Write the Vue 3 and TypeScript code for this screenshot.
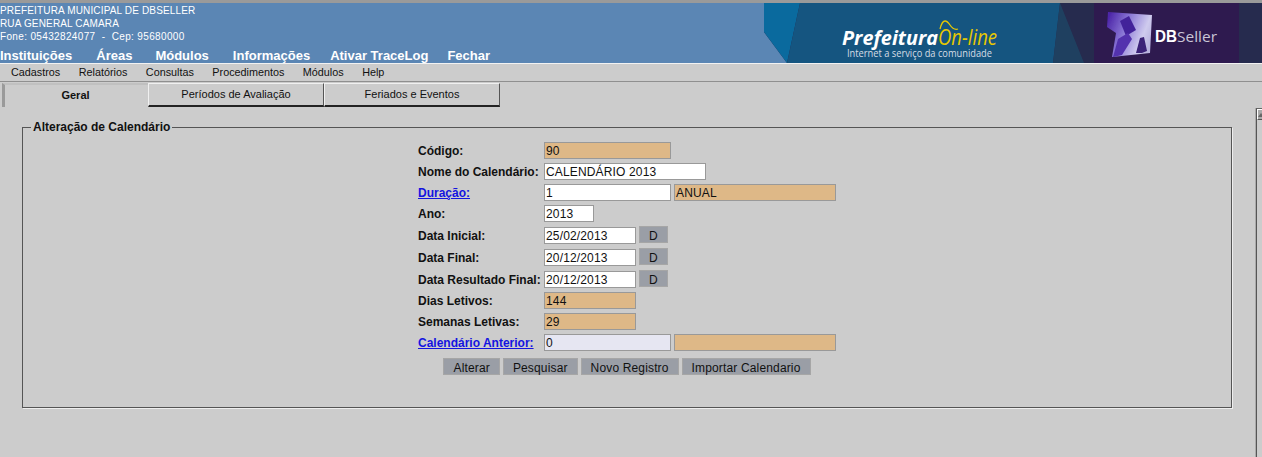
<script setup lang="ts">
interface Field {
  label: string
  link?: boolean
  value: string
  kind: 'ro' | 'edit' | 'lookup'
  width: number
  extra?: string
  date?: boolean
}

const topMenu = [
  { text: 'Instituições', gap: 24 },
  { text: 'Áreas', gap: 23 },
  { text: 'Módulos', gap: 24 },
  { text: 'Informações', gap: 20 },
  { text: 'Ativar TraceLog', gap: 19 },
  { text: 'Fechar', gap: 0 }
]
const subMenu = ['Cadastros', 'Relatórios', 'Consultas', 'Procedimentos', 'Módulos', 'Help']
const tabs = ['Geral', 'Períodos de Avaliação', 'Feriados e Eventos']
const actions = ['Alterar', 'Pesquisar', 'Novo Registro', 'Importar Calendario']

const fields: Field[] = [
  { label: 'Código:', value: '90', kind: 'ro', width: 127 },
  { label: 'Nome do Calendário:', value: 'CALENDÁRIO 2013', kind: 'edit', width: 162 },
  { label: 'Duração:', link: true, value: '1', kind: 'edit', width: 127, extra: 'ANUAL' },
  { label: 'Ano:', value: '2013', kind: 'edit', width: 50 },
  { label: 'Data Inicial:', value: '25/02/2013', kind: 'edit', width: 92, date: true },
  { label: 'Data Final:', value: '20/12/2013', kind: 'edit', width: 92, date: true },
  { label: 'Data Resultado Final:', value: '20/12/2013', kind: 'edit', width: 92, date: true },
  { label: 'Dias Letivos:', value: '144', kind: 'ro', width: 92 },
  { label: 'Semanas Letivas:', value: '29', kind: 'ro', width: 92 },
  { label: 'Calendário Anterior:', link: true, value: '0', kind: 'lookup', width: 127, extra: '' }
]
</script>

<template>
  <div class="page">
    <header class="head">
      <div class="head-left">
        <div class="org">
          <div>PREFEITURA MUNICIPAL DE DBSELLER</div>
          <div>RUA GENERAL CAMARA</div>
          <div class="fone">Fone: 05432824077 &nbsp;-&nbsp; Cep: 95680000</div>
        </div>
        <nav class="top-menu">
          <span v-for="m in topMenu" :key="m.text" :style="{ marginRight: m.gap + 'px' }">{{ m.text }}</span>
        </nav>
      </div>
      <svg class="banner" width="498" height="60" viewBox="0 0 498 60">
        <defs>
          <linearGradient id="cube" x1="0" y1="0.2" x2="1" y2="0.6">
            <stop offset="0" stop-color="#4d26a8" />
            <stop offset="0.4" stop-color="#8a78d6" />
            <stop offset="0.8" stop-color="#cfcbee" />
            <stop offset="1" stop-color="#b9b4df" />
          </linearGradient>
          <filter id="soft"><feGaussianBlur stdDeviation="0.7" /></filter>
        </defs>
        <polygon points="0,0 498,0 498,60 23,60 0,29" fill="#262b4e" />
        <polygon points="0,0 36,0 23,60 0,29" fill="#0a6a9e" />
        <polygon points="36,0 296,0 289,60 23,60" fill="#155580" />
        <polygon points="296,0 289,60 320,60" fill="#1f4060" />
        <rect x="330" y="0" width="145" height="60" fill="#2e1a4f" />
        <text x="78" y="42" class="pm" textLength="96" lengthAdjust="spacingAndGlyphs">Prefeitura</text>
        <text x="174" y="42" class="ol" textLength="59" lengthAdjust="spacingAndGlyphs">On-line</text>
        <path d="M176 26c1-4 3-8 5-8s3 1 5 4 5 5 8 4" fill="none" stroke="#e8c800" stroke-width="1.3" />
        <text x="83" y="54" class="sub" textLength="145" lengthAdjust="spacingAndGlyphs">Internet a serviço da comunidade</text>
        <g filter="url(#soft)">
          <polygon points="344,9 388,12 386,50 348,54 352,30 343,24" fill="url(#cube)" />
          <polygon points="356,18 365,13 372,27 362,33" fill="#43249a" />
          <polygon points="349,54 354,36 364,30 368,36 358,52" fill="#5330ae" />
          <polygon points="372,50 376,35 380,34 383,48 378,50" fill="#3a2278" />
        </g>
        <text x="391" y="39" class="db" textLength="22" lengthAdjust="spacingAndGlyphs">DB</text>
        <text x="413" y="39" class="seller" textLength="40" lengthAdjust="spacingAndGlyphs">Seller</text>
      </svg>
    </header>

    <nav class="sub-menu">
      <span v-for="s in subMenu" :key="s">{{ s }}</span>
    </nav>

    <div class="tabs">
      <div v-for="(t, i) in tabs" :key="t" class="tab" :class="{ active: i === 0 }">{{ t }}</div>
    </div>

    <div class="body">
      <fieldset class="box">
        <legend>Alteração de Calendário</legend>
        <div class="form">
          <div v-for="f in fields" :key="f.label" class="row" :class="{ date: f.date }">
            <a v-if="f.link" class="label link">{{ f.label }}</a>
            <span v-else class="label">{{ f.label }}</span>
            <div class="input" :class="f.kind" :style="{ width: f.width + 'px' }">{{ f.value }}</div>
            <div v-if="f.extra !== undefined" class="input ro wide">{{ f.extra }}</div>
            <div v-if="f.date" class="btn day">D</div>
          </div>
          <div class="actions">
            <div v-for="a in actions" :key="a" class="btn">{{ a }}</div>
          </div>
        </div>
      </fieldset>
      <div class="scroll">
        <div class="scroll-cap"><i class="arrow"></i></div>
      </div>
    </div>
  </div>
</template>

<style>
html,
body {
  margin: 0;
  background: #cccccc;
}
</style>

<style scoped>
.page {
  height: 457px;
  overflow: hidden;
  background: #cccccc;
  font-family: "Liberation Sans", Arial, sans-serif;
  font-size: 11px;
  color: #111;
  display: flex;
  flex-direction: column;
}

.head {
  display: flex;
  height: 60px;
  flex: none;
  border-top: 3px solid #9a9a9a;
  border-bottom: 1px solid #f2f2f2;
  background: #5b86b4;
}

.head-left {
  flex: 1;
  color: #fff;
  overflow: hidden;
}

.org {
  font-size: 10px;
  letter-spacing: 0.15px;
  line-height: 13px;
  height: 44px;
  padding-top: 1px;
}

.fone {
  letter-spacing: 0.35px;
}

.top-menu {
  font-size: 13px;
  font-weight: bold;
  line-height: 15px;
  white-space: nowrap;
}

.banner {
  flex: none;
  display: block;
}

.pm {
  font: italic bold 20px "Open Sans", sans-serif;
  fill: #fff;
}

.ol {
  font: italic 21px "Open Sans", sans-serif;
  fill: #e8c800;
}

.sub {
  font: 10px "Open Sans", sans-serif;
  fill: #d5dde5;
}

.db {
  font: bold 16px "Liberation Sans", sans-serif;
  fill: #fff;
}

.seller {
  font: 15px "Open Sans", sans-serif;
  fill: #c9c6d6;
}

.sub-menu {
  height: 17px;
  line-height: 17px;
  font-size: 10.8px;
  padding-left: 11px;
  display: flex;
  gap: 18.5px;
  border-bottom: 1px solid #8f8f8f;
  flex: none;
}

.tabs {
  display: flex;
  height: 24px;
  margin-top: 1px;
  padding-left: 2px;
  flex: none;
}

.tab {
  width: 176px;
  box-sizing: border-box;
  text-align: center;
  line-height: 20px;
  border-top: 1px solid #f0f0f0;
  border-left: 1px solid #f0f0f0;
  border-right: 1px solid #555;
  border-bottom: 2px solid #222;
}

.tab.active {
  width: 146px;
  padding-right: 2px;
  font-weight: bold;
  line-height: 21px;
  border: 0;
  border-left: 3px solid #9a9a9a;
  border-top: 2px solid #c0c0c0;
}

.body {
  flex: 1;
  display: flex;
  padding-left: 22px;
  padding-top: 13px;
  min-height: 0;
}

.box {
  width: 1210px;
  height: 288px;
  flex: none;
  box-sizing: border-box;
  margin: 0;
  padding: 0;
  border: 1px solid #555;
  box-shadow: 1px 1px 0 #eee;
  min-width: 0;
}

legend {
  margin-left: 8px;
  padding: 0 2px;
  font-size: 12px;
  font-weight: bold;
  line-height: 14px;
}

.form {
  width: 418px;
  margin: 8px auto 0;
}

.row {
  display: flex;
  align-items: flex-start;
  height: 21px;
}

.row.date {
  height: 22px;
}

.row.date .label,
.row.date .input {
  margin-top: 1px;
}

.label {
  width: 126px;
  flex: none;
  font-size: 12px;
  font-weight: bold;
  line-height: 18px;
  white-space: nowrap;
}

.link {
  color: #1414e0;
  text-decoration: underline;
}

.input {
  height: 17px;
  box-sizing: border-box;
  border: 1px solid #999;
  background: #fff;
  line-height: 17px;
  padding-left: 1px;
  font-size: 12px;
  letter-spacing: 0.15px;
  flex: none;
}

.input.ro {
  background: #deb887;
}

.input.lookup {
  background: #e6e6f2;
}

.input.wide {
  width: 162px;
  margin-left: 3px;
}

.btn {
  height: 17px;
  line-height: 18px;
  background: #9a9ea6;
  border: 1px solid #a6a6a6;
  box-sizing: border-box;
  padding: 0 9px;
  font-size: 12px;
  letter-spacing: 0.15px;
  flex: none;
}

.btn.day {
  width: 29px;
  padding: 0;
  text-align: center;
  margin-left: 3px;
}

.actions {
  display: flex;
  justify-content: center;
  gap: 3px;
  margin-top: 3px;
}

.scroll {
  margin-left: 24px;
  margin-top: -12px;
  margin-bottom: -40px;
  width: 6px;
  box-sizing: border-box;
  flex: none;
  border-top: 1px solid #666;
  border-left: 1px solid #555;
  box-shadow: -1px 0 0 #aaa;
}

.scroll-cap {
  height: 11px;
  box-sizing: border-box;
  background: #aaa;
  border-top: 1px solid #fff;
  border-left: 1px solid #fff;
  border-bottom: 1px solid #555;
  overflow: hidden;
  display: flex;
  padding-top: 3px;
}

.arrow {
  display: block;
  width: 0;
  height: 0;
  border-left: 3px solid transparent;
  border-right: 3px solid transparent;
  border-bottom: 4px solid #666;
}
</style>
